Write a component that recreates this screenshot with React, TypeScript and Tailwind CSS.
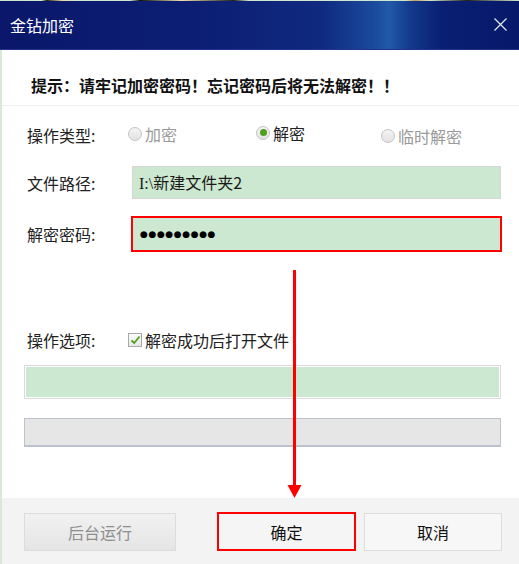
import React from "react";

function Radio({ checked, disabled, label, className }: { checked?: boolean; disabled?: boolean; label: string; className?: string }) {
  return (
    <div className={"flex items-center " + (className ?? "")}>
      <span className="relative flex h-[14px] w-[14px] items-center justify-center rounded-full border border-[#c4c4c4] bg-gradient-to-b from-[#f4f4f4] to-[#e2e2e2]">
        {checked && <span className="h-[7px] w-[7px] rounded-full bg-[#4f9f1c]" />}
      </span>
      <span className={"ml-[3px] text-[16px] leading-[20px] " + (disabled ? "text-[#9a9a9a]" : "text-[#222]")}>{label}</span>
    </div>
  );
}

export default function App() {
  return (
    <div className="relative flex h-[564px] w-[519px] flex-col overflow-hidden bg-[#d6ead6] font-['Noto_Sans_CJK_SC','Microsoft_YaHei',sans-serif] text-[#222]">
      {/* top strip from background */}
      <div className="h-[1px] w-full bg-[linear-gradient(to_right,#cfe6cf_0%,#cfe6cf_8%,#222_9%,#e8d8a0_12%,#cfe6cf_14%,#cfe6cf_25%,#111_27%,#f0e0b0_35%,#222_45%,#cfe6cf_48%,#cfe6cf_78%,#c8a060_80%,#cfe6cf_83%,#222_90%,#cfe6cf_100%)]" />
      {/* title bar */}
      <div className="flex h-[49px] items-center justify-between border-b border-[#22348a] bg-[linear-gradient(to_right,#0a176a_0%,#0c1f74_40%,#0f2a80_62%,#1a4a9c_72%,#2159a8_75%,#123a8c_79%,#0a1f72_85%,#07186a_100%)] pl-[10px] pr-[12px]">
        <span className="text-[16px] leading-[20px] text-white">金钻加密</span>
        <svg width="13" height="13" viewBox="0 0 13 13" className="mt-[-1px]">
          <path d="M0.5 0.5 L12.5 12.5 M12.5 0.5 L0.5 12.5" stroke="#e6e9f2" strokeWidth="1.2" />
        </svg>
      </div>
      {/* body */}
      <div className="flex flex-1 flex-col pl-[2px]">
        <div className="flex flex-1 flex-col bg-white">
          <div className="flex h-[56px] items-start border-b border-[#efefef] pl-[29px] pt-[26px]">
            <span className="text-[16px] font-bold leading-[18px] text-[#111]">提示：请牢记加密密码！忘记密码后将无法解密！！</span>
          </div>
          {/* operation type */}
          <div className="mt-[19px] flex h-[20px] items-center pl-[25px]">
            <span className="w-[101px] text-[16px] leading-[20px] text-[#222]">操作类型:</span>
            <Radio disabled label="加密" className="mt-[-3px] w-[128px]" />
            <Radio checked label="解密" className="mt-[-5px] w-[125px]" />
            <Radio disabled label="临时解密" className="mt-[1px]" />
          </div>
          {/* file path */}
          <div className="mt-[21px] flex items-center pl-[25px] pr-[18px]">
            <span className="w-[105px] text-[16px] leading-[20px] text-[#222]">文件路径:</span>
            <div className="flex h-[33px] flex-1 items-center border border-[#d6d6d6] bg-[#cde8d0] pl-[6px]">
              <span className="text-[16px] leading-[20px] text-[#1a1a1a]"><span className="font-['Liberation_Serif',serif]">I:\</span>新建文件夹2</span>
            </div>
          </div>
          {/* password */}
          <div className="mt-[17px] flex items-center pl-[25px] pr-[17px]">
            <span className="w-[104px] text-[16px] leading-[20px] text-[#222]">解密密码:</span>
            <div className="flex h-[36px] flex-1 items-center border-2 border-[#ff0000] bg-[#cde8d0] pl-[7px]">
              <span className="font-['DejaVu_Sans',sans-serif] text-[9px] leading-[16px] tracking-[0.6px] text-black">●●●●●●●●●</span>
            </div>
          </div>
          {/* options */}
          <div className="mt-[78px] flex h-[20px] items-center pl-[25px]">
            <span className="w-[101px] text-[16px] leading-[20px] text-[#222]">操作选项:</span>
            <span className="flex h-[14px] w-[14px] items-center justify-center border border-[#a9a9a9] bg-gradient-to-b from-[#fafafa] to-[#e8e8e8]">
              <svg width="11" height="10" viewBox="0 0 11 10">
                <path d="M1.5 5.5 L4.2 8 L9.5 1.5" stroke="#4f9f1c" strokeWidth="1.8" fill="none" />
              </svg>
            </span>
            <span className="ml-[3px] text-[16px] leading-[20px] text-[#222]">解密成功后打开文件</span>
          </div>
          {/* green bar */}
          <div className="ml-[22px] mr-[18px] mt-[15px] h-[34px] border border-[#dadada] bg-[#cde8d0] shadow-[inset_0_0_0_1px_#ffffff]" />
          {/* grey bar */}
          <div className="ml-[22px] mr-[18px] mt-[19px] h-[29px] border border-b-2 border-[#bcc2cc] bg-[#e6e6e6]" />
          <div className="flex-1" />
          {/* footer */}
          <div className="flex h-[66px] items-start bg-[#f3f3f3] pl-[22px] pt-[15px]">
            <div className="flex h-[38px] w-[152px] items-center justify-center border border-[#dcdcdc] bg-gradient-to-b from-[#f1f1f1] to-[#e5e5e5]">
              <span className="text-[16px] leading-[20px] text-[#8e8e8e]">后台运行</span>
            </div>
            <div className="ml-[41px] mt-[-1px] flex h-[39px] w-[139px] items-center justify-center border-2 border-[#ff0000] bg-[#f5f5f5]">
              <span className="text-[16px] leading-[20px] text-[#111]">确定</span>
            </div>
            <div className="ml-[8px] flex h-[38px] w-[138px] items-center justify-center border border-[#dcdcdc] bg-[#f7f7f7]">
              <span className="text-[16px] leading-[20px] text-[#111]">取消</span>
            </div>
          </div>
        </div>
      </div>
      {/* annotation arrow */}
      <svg className="absolute left-0 top-0" width="519" height="564" viewBox="0 0 519 564">
        <line x1="294.5" y1="270" x2="294.5" y2="488" stroke="#ff0000" strokeWidth="3" />
        <polygon points="287.5,485 301.5,485 294.5,498" fill="#ff0000" />
      </svg>
    </div>
  );
}
